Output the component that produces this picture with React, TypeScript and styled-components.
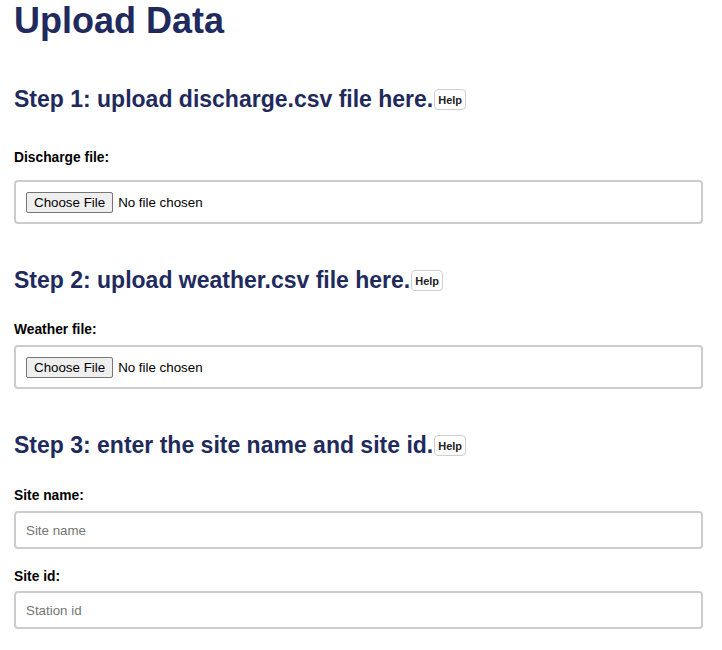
import React from "react";
import styled, { createGlobalStyle } from "styled-components";

const GlobalStyle = createGlobalStyle`
  html, body {
    margin: 0;
    padding: 0;
    background: #ffffff;
  }
  body {
    font-family: "Liberation Sans", Arial, sans-serif;
    color: #000;
  }
`;

const NAVY = "#212a5c";

const Page = styled.main`
  display: flex;
  flex-direction: column;
  padding: 0 19px 0 14px;
`;

const Title = styled.h1`
  margin: 0;
  font-family: "Liberation Sans", Arial, sans-serif;
  font-size: 36px;
  font-weight: 700;
  line-height: normal;
  color: ${NAVY};
`;

const StepHeading = styled.h2<{ $top: number }>`
  margin: ${(p) => p.$top}px 0 0;
  font-family: "Liberation Sans", Arial, sans-serif;
  font-size: 23px;
  font-weight: 700;
  line-height: normal;
  color: ${NAVY};
`;

const HelpButton = styled.button`
  display: inline-block;
  vertical-align: middle;
  box-sizing: border-box;
  height: 21px;
  margin: 0 0 0 1px;
  padding: 0 3px;
  background: #ffffff;
  border: 1px solid #cfcfcf;
  border-radius: 4px;
  font-family: "Liberation Sans", Arial, sans-serif;
  font-size: 11px;
  font-weight: 700;
  color: #222;
  position: relative;
  top: -1px;
  cursor: pointer;
`;

const FieldLabel = styled.label<{ $top: number }>`
  display: block;
  margin-top: ${(p) => p.$top}px;
  font-family: "Liberation Sans", Arial, sans-serif;
  font-size: 13.8px;
  font-weight: 700;
  line-height: normal;
  color: #000;
`;

const FileBox = styled.div<{ $top: number }>`
  display: flex;
  align-items: flex-start;
  box-sizing: border-box;
  height: 44px;
  margin-top: ${(p) => p.$top}px;
  padding: 10px 10px 9px;
  border: 2px solid #cccccc;
  border-radius: 4px;
  background: #fff;
`;

const FileInput = styled.input`
  font-family: "Liberation Sans", Arial, sans-serif;
  font-size: 13.33px;
  color: #000;
  margin: 0;

  &::file-selector-button {
    font-family: "Liberation Sans", Arial, sans-serif;
    font-size: 13.33px;
    height: 21px;
    padding: 1px 7px;
    margin: 0 5px 0 0;
    background: #efefef;
    border: 1px solid #767676;
    border-radius: 2px;
    color: #000;
  }
`;

const TextInput = styled.input<{ $top: number }>`
  display: block;
  box-sizing: border-box;
  width: 100%;
  height: 38px;
  margin: ${(p) => p.$top}px 0 0;
  padding: 0 10px;
  border: 2px solid #cccccc;
  border-radius: 4px;
  font-family: "Liberation Sans", Arial, sans-serif;
  font-size: 13.33px;
  color: #000;
  background: #fff;
  outline: none;

  &::placeholder {
    color: #757575;
  }
`;

export default function App() {
  return (
    <>
      <GlobalStyle />
      <Page>
        <Title>Upload Data</Title>

        <StepHeading $top={44}>
          Step 1: upload discharge.csv file here.<HelpButton type="button">Help</HelpButton>
        </StepHeading>
        <FieldLabel $top={37} htmlFor="discharge">
          Discharge file:
        </FieldLabel>
        <FileBox $top={15}>
          <FileInput id="discharge" type="file" accept=".csv" />
        </FileBox>

        <StepHeading $top={43}>
          Step 2: upload weather.csv file here.<HelpButton type="button">Help</HelpButton>
        </StepHeading>
        <FieldLabel $top={28} htmlFor="weather">
          Weather file:
        </FieldLabel>
        <FileBox $top={8}>
          <FileInput id="weather" type="file" accept=".csv" />
        </FileBox>

        <StepHeading $top={43}>
          Step 3: enter the site name and site id.<HelpButton type="button">Help</HelpButton>
        </StepHeading>
        <FieldLabel $top={29} htmlFor="site-name">
          Site name:
        </FieldLabel>
        <TextInput $top={8} id="site-name" type="text" placeholder="Site name" />
        <FieldLabel $top={20} htmlFor="site-id">
          Site id:
        </FieldLabel>
        <TextInput $top={7} id="site-id" type="text" placeholder="Station id" />
      </Page>
    </>
  );
}
